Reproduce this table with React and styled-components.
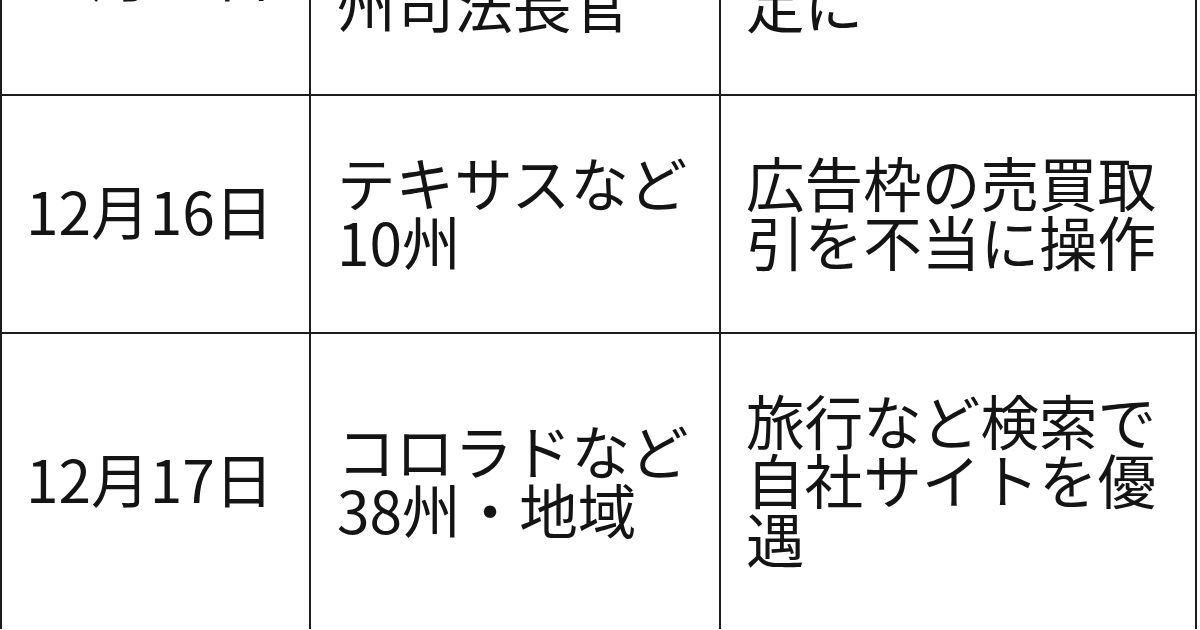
import React from 'react'
import styled, { createGlobalStyle } from 'styled-components'

const GlobalStyle = createGlobalStyle`
  html, body {
    margin: 0;
    padding: 0;
    background: #ffffff;
  }
  body {
    width: 1200px;
    height: 630px;
    overflow: hidden;
  }
`

const rows = [
  {
    date: '10月20日',
    who: ['米司法省と11', '州司法長官'],
    what: ['検索サービスの設', '定に'],
  },
  {
    date: '12月16日',
    who: ['テキサスなど', '10州'],
    what: ['広告枠の売買取', '引を不当に操作'],
  },
  {
    date: '12月17日',
    who: ['コロラドなど', '38州・地域'],
    what: ['旅行など検索で', '自社サイトを優', '遇'],
  },
]

// the table is cropped: its first row runs off the top, its foot off the bottom
const Table = styled.div`
  display: grid;
  grid-template-columns: 307px 408px 474px;
  gap: 2px;
  padding: 2px 2px 0;
  width: max-content;
  margin-top: -144px;
  background: #1c1c1c;
`

const Cell = styled.div`
  display: flex;
  flex-direction: column;
  justify-content: center;
  padding: ${(p) => (p.$single ? '53px' : '56px')} 20px 62px ${(p) => p.$indent}px;
  background: #ffffff;
  color: #141414;
  font-family: 'Noto Sans CJK JP', 'Noto Sans', sans-serif;
  font-size: 58.6px;
  line-height: 59px;
  white-space: nowrap;
`

const Line = styled.span`
  display: block;
`

const Lines = ({ items }) =>
  items.map((text) => <Line key={text}>{text}</Line>)

export default function App() {
  return (
    <>
      <GlobalStyle />
      <Table>
        {rows.map((row) => (
          <React.Fragment key={row.date}>
            <Cell $indent={24} $single>
              {row.date}
            </Cell>
            <Cell $indent={26}>
              <Lines items={row.who} />
            </Cell>
            <Cell $indent={25}>
              <Lines items={row.what} />
            </Cell>
          </React.Fragment>
        ))}
      </Table>
    </>
  )
}
